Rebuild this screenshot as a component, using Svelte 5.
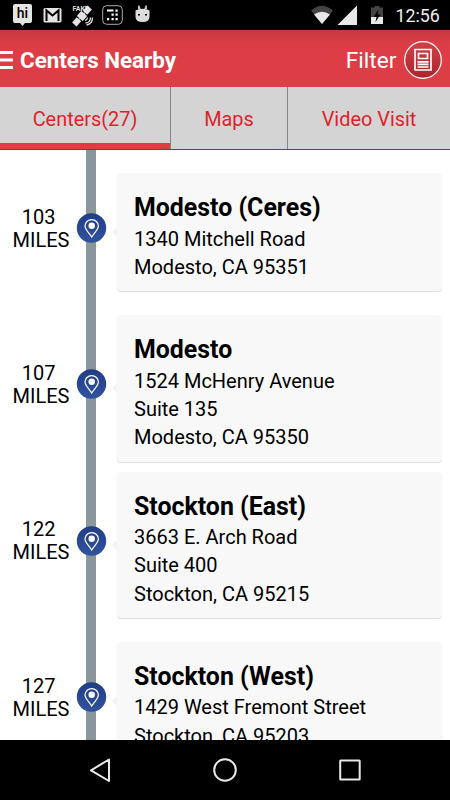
<script>
	const tabs = [
		{ label: 'Centers(27)', active: true },
		{ label: 'Maps' },
		{ label: 'Video Visit' },
	];

	const centers = [
		{ miles: 103, name: 'Modesto (Ceres)', address: ['1340 Mitchell Road', 'Modesto, CA 95351'] },
		{ miles: 107, name: 'Modesto', address: ['1524 McHenry Avenue', 'Suite 135', 'Modesto, CA 95350'] },
		{ miles: 122, name: 'Stockton (East)', address: ['3663 E. Arch Road', 'Suite 400', 'Stockton, CA 95215'] },
		{ miles: 127, name: 'Stockton (West)', address: ['1429 West Fremont Street', 'Stockton, CA 95203'] },
	];
</script>

<div class="screen">
	<div class="status">
		<svg width="160" height="30" viewBox="0 0 160 30">
			<path fill="#e4e4e4" d="M15 4h15q2 0 2 2v15q0 2-2 2h-5l-2.500 3-2.500-3h-5q-2 0-2-2V6q0-2 2-2z" />
			<text x="16.800" y="18" font-size="14" font-weight="500" fill="#000">hi</text>

			<rect x="43.500" y="8" width="18" height="14.500" rx="1.500" fill="#e4e4e4" />
			<path fill="none" stroke="#000" stroke-width="2" d="M46.500 21V10.500l6 5 6-5V21" />

			<text x="72.500" y="11" font-size="7" font-weight="700" fill="#ddd">FAKE</text>
			<g transform="rotate(-48 82 16)" fill="#e4e4e4">
				<rect x="70.500" y="13" width="7" height="6" />
				<rect x="78.500" y="12" width="7" height="8" rx="1" />
				<rect x="86.500" y="13" width="7" height="6" />
				<path d="M77 15.500h10v1H77z" />
			</g>
			<path fill="none" stroke="#ddd" stroke-width="1.300" d="M85 20.500q2.500-1 2.500-3M85.500 23q5-.500 5-5.500M86.500 25q6-1 6-7.500" />

			<rect x="102.700" y="5.700" width="19.600" height="18.600" rx="4" fill="none" stroke="#aaa" />
			<path fill="#fff" d="M107 9.500h6.500v2H107zM111.500 13.500h2.200v2.200h-2.200zM115.500 9.500h2.200v2.200h-2.200zM115.500 13.500h2.200v2.200h-2.200zM107 18h2.200v2.200H107zM111.500 18h2.200v2.200h-2.200zM115.500 18h2.200v2.200h-2.200z" />

			<path fill="#bbb" d="M138 5.500l1.500 0 1.500 4h-3zM147 5.500l-1.500 0-1.500 4h3z" />
			<path fill="#ddd" d="M135.500 10.500l2.500-1q4.500-1.500 9 0l2.500 1v6q0 5.500-7 5.500t-7-5.500z" />
			<path fill="#000" d="M138 14h2v1.500h-2zM145 14h2v1.500h-2z" />
		</svg>
		<svg width="150" height="30" viewBox="300 0 150 30">
			<path fill="#444" d="M311 10.500Q322 1 333 10.500L322 24z" />
			<path fill="#e8e8e8" d="M314 14.500q8-5.500 16 0L322 24z" />
			<path fill="#e8e8e8" d="M357 5.500V25h-19.500z" />
			<path fill="#444" d="M371 7.500h3.500V6h5v1.500h3.500V18h-12z" />
			<path fill="#e8e8e8" d="M371 17h12v7h-12z" />
			<path fill="#000" d="M378.500 9.500L373.500 17h3l-1 5 5-7.500h-3z" />
			<text x="395.500" y="21.500" font-size="17.800" font-weight="400" fill="#eee">12:56</text>
		</svg>
	</div>

	<header>
		<svg class="burger" width="13" height="20" viewBox="0 0 13 20">
			<path stroke="#fff" stroke-width="3" d="M0 2.500h13M0 10h13M0 17.500h13" />
		</svg>
		<h1>Centers Nearby</h1>
		<span class="filter">Filter</span>
		<svg class="news" width="38" height="38" viewBox="0 0 38 38">
			<defs>
				<linearGradient id="news" x2="0" y2="1">
					<stop stop-color="#d34148" />
					<stop offset="1" stop-color="#aa252d" />
				</linearGradient>
			</defs>
			<circle cx="19" cy="19" r="18.300" fill="url(#news)" stroke="#fff" stroke-width="1.200" />
			<path fill="none" stroke="#fff" stroke-width="1.700" d="M11 8.500h16v20.500H11zM14.500 12.500h9v5h-9zM13.500 20.800h11M13.500 23.400h11M13.500 26h11" />
		</svg>
	</header>

	<nav>
		{#each tabs as tab}
			<div class="tab" class:active={tab.active}>{tab.label}</div>
		{/each}
	</nav>

	<main>
		{#each centers as center}
			<div class="row">
				<div class="miles">{center.miles}&nbsp;<br />MILES</div>
				<div class="pin">
					<svg width="31" height="30" viewBox="0 0 31 30">
						<defs>
							<linearGradient id="pin{center.miles}" x2="0" y2="1">
								<stop stop-color="#203d87" />
								<stop offset="1" stop-color="#31539f" />
							</linearGradient>
						</defs>
						<circle cx="15.500" cy="15" r="14.700" fill="url(#pin{center.miles})" />
						<path fill="none" stroke="#fff" stroke-width="1.200" d="M15.700 24C13 19.500 9 16.500 9 13.100a6.700 6.500 0 0 1 13.400 0C22.400 16.500 18.400 19.500 15.700 24z" />
						<circle cx="15.700" cy="12.800" r="3.200" fill="#fff" />
					</svg>
				</div>
				<div class="card">
					<h2>{center.name}</h2>
					{#each center.address as line}
						<p>{line}</p>
					{/each}
				</div>
			</div>
		{/each}
	</main>

	<footer>
		<svg width="450" height="60" viewBox="0 0 450 60" fill="none" stroke="#e8e8e8" stroke-width="2">
			<path stroke-linejoin="round" d="M109 19.500v21.500L91 30.300z" />
			<circle cx="225" cy="30" r="10.800" />
			<rect x="340.200" y="20.500" width="19.500" height="19" rx=".5" />
		</svg>
	</footer>
</div>

<style>
	:global(body) {
		margin: 0;
	}
	.screen {
		width: 450px;
		height: 800px;
		overflow: hidden;
		display: flex;
		flex-direction: column;
		background: #fff;
		color: #000;
		font-family: Roboto, sans-serif;
	}
	svg {
		display: block;
		flex: none;
	}
	h1,
	h2,
	p {
		margin: 0;
	}
	.status {
		flex: none;
		height: 30px;
		display: flex;
		justify-content: space-between;
		background: #000;
	}
	header {
		flex: none;
		box-sizing: border-box;
		height: 57px;
		padding-right: 8px;
		display: flex;
		align-items: center;
		color: #fff;
		background: linear-gradient(#c5383f, #dd3e46 14px);
	}
	h1 {
		margin: 0 auto 0 7px;
		padding-top: 3px;
		font-size: 22.4px;
		font-weight: 700;
	}
	.burger {
		margin-top: 3px;
	}
	.filter {
		margin-right: 7.5px;
		padding-top: 3px;
		font-size: 22.7px;
	}
	.news {
		margin-top: 2px;
	}
	nav {
		flex: none;
		height: 63px;
		display: grid;
		grid-template-columns: 171px 117px 162px;
		background: #cf1820;
	}
	.tab {
		box-sizing: border-box;
		margin-bottom: 1px;
		padding-top: 2px;
		display: flex;
		align-items: center;
		justify-content: center;
		border-right: 1px solid #7d898f;
		background: #d4d4d4;
		color: #df1f2b;
		font-size: 19.9px;
	}
	.tab:last-child {
		border-right: 0;
	}
	.tab.active {
		box-shadow: inset 0 -6px #dd3e46;
	}
	main {
		flex: 1;
		min-height: 0;
		overflow: hidden;
		background: linear-gradient(#8b969b, #8b969b) 86px 0 / 10px 100% no-repeat;
	}
	.row {
		height: 156.3px;
		display: grid;
		grid-template-columns: 76px 31px 1fr;
		align-items: center;
	}
	.miles {
		padding: 1px 0 0 6px;
		text-align: center;
		font-size: 20px;
		line-height: 23px;
	}
	.card {
		position: relative;
		top: 4px;
		box-sizing: border-box;
		margin: 0 8px 0 10px;
		padding: 23px 17px 10px;
		border-radius: 4px;
		background: #f8f8f8;
		box-shadow: 0 1px 1px #ddd;
	}
	.card::before {
		content: '';
		position: absolute;
		left: -5px;
		top: calc(50% - 5px);
		border: 5px solid transparent;
		border-left: 0;
		border-right-color: #f3f3f3;
	}
	h2,
	p {
		line-height: 28.3px;
		white-space: nowrap;
	}
	h2 {
		position: relative;
		top: -2px;
		font-size: 24.9px;
		font-weight: 700;
	}
	p {
		font-size: 20px;
	}
	footer {
		flex: none;
		height: 60px;
		background: #000;
	}
</style>
